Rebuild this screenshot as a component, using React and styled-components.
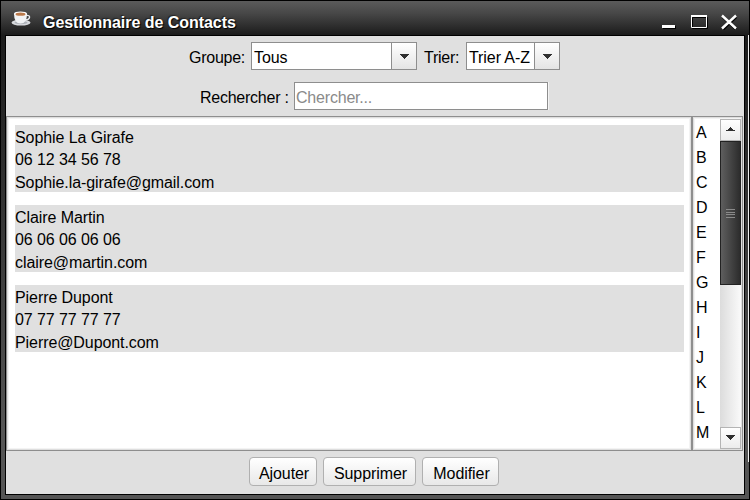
import React from "react";
import styled, { createGlobalStyle, css } from "styled-components";

const Global = createGlobalStyle`
  *, *::before, *::after { box-sizing: border-box; }
  body { margin: 0; overflow: hidden; }
`;

const Window = styled.div`
  width: 750px;
  height: 500px;
  display: grid;
  grid-template-rows: 34px 1fr;
  border: 1px solid #000;
  background: #505050;
  font: 16px/22px "Liberation Sans", Arial, sans-serif;
  letter-spacing: -0.08px;
  color: #000;
`;

const TitleBar = styled.header`
  display: flex;
  align-items: center;
  padding: 0 11px 0 9px;
  background: linear-gradient(#5b5b5b 0%, #484848 35%, #1b1b1b 100%);
  color: #fff;
`;

const Title = styled.h1`
  margin: 9px 0 0 10px;
  flex: 1;
  font-size: 16px;
  line-height: 20px;
  font-weight: bold;
  letter-spacing: -0.04px;
  text-shadow: 1px 1px 1px #000, -1px -1px 1px #222;
`;

const TitleIcon = styled.svg`
  display: block;
  margin-top: 2px;
`;

const WindowControls = styled.svg`
  display: block;
  margin-top: 7px;
`;

const Frame = styled.div`
  display: grid;
  grid-template-columns: 1fr 3px 1px;
  padding-left: 4px;
  padding-bottom: 4px;
  background: linear-gradient(#1b1b1b, #555 85%);
`;

const EdgeLight = styled.div`
  grid-column: 3;
  height: 427px;
  background: linear-gradient(90deg, #fff, #ddd);
`;

const Content = styled.main`
  display: grid;
  grid-template-rows: 80px 335px 43px;
  border: 1px solid #000;
  background: #e0e0e0;
`;

const Filters = styled.section`
  display: flex;
  flex-direction: column;
  align-items: center;
  padding: 6px 1px 0 0;
  gap: 12px;
`;

const FilterRow = styled.div`
  display: flex;
  align-items: center;
  gap: 6px;
  height: 28px;
`;

const Label = styled.label`
  width: ${(p) => p.$width}px;
  padding-top: 4px;
  white-space: pre;
  letter-spacing: -0.25px;
`;

const SortLabel = styled(Label)`
  padding-left: 1px;
`;

const Select = styled.div`
  display: flex;
  width: ${(p) => p.$width}px;
  height: 28px;
  border: 1px solid #8e8e8e;
  background: #fff;
`;

const SelectValue = styled.span`
  flex: 1;
  padding: 4px 0 0 2px;
  white-space: nowrap;
`;

const SelectButton = styled.span`
  display: grid;
  place-items: center;
  width: 25px;
  padding-top: 1px;
  border-left: 1px solid #8e8e8e;
  background: linear-gradient(#fff, #e4e4e4);
`;

const SearchField = styled.input`
  width: 254px;
  height: 28px;
  margin: 0 1px 0 0;
  padding: 4px 2px 0 1px;
  border: 1px solid #8e8e8e;
  border-radius: 0;
  outline: 0;
  background: #fff;
  font: inherit;
  letter-spacing: -0.2px;
  box-shadow: 1px 0 0 #f4f4f4;
  &::placeholder { color: #8a8a8a; }
`;

const Panes = styled.div`
  display: grid;
  grid-template-columns: 686px 51px;
`;

const pane = css`
  border: 1px solid #8e8e8e;
  background: #fff;
  box-shadow: inset 0 0 0 1px #dedede, inset 0 0 0 2px #f3f3f3;
  overflow: hidden;
`;

const ContactList = styled.ul`
  ${pane}
  margin: 0;
  padding: 8px 7px 0 8px;
  list-style: none;
  display: flex;
  flex-direction: column;
  gap: 13px;
`;

const Contact = styled.li`
  height: 67px;
  background: #e0e0e0;
  display: grid;
  grid-template-rows: 22px 23px 22px;
  line-height: 26px;
`;

const IndexPane = styled.nav`
  ${pane}
  display: flex;
  justify-content: space-between;
  padding: 2px 1px 1px 3px;
`;

const Letters = styled.div`
  display: flex;
  flex-direction: column;
`;

const Letter = styled.span`
  height: 25px;
  line-height: 27px;
`;

const Scrollbar = styled.div`
  display: grid;
  grid-template-rows: 22px 144px 1fr 22px;
  width: 21px;
  background: linear-gradient(90deg, #dcdcdc, #fafafa);
`;

const ScrollButton = styled.div`
  display: grid;
  place-items: center;
  border: 1px solid #b4b4b4;
  background: linear-gradient(#fff, #ececec);
`;

const Thumb = styled.div`
  display: grid;
  place-items: center;
  border: 1px solid #222;
  background: linear-gradient(90deg, #5e5e5e, #4a4a4a 40%, #2c2c2c);
`;

const Actions = styled.footer`
  display: flex;
  justify-content: center;
  gap: 6px;
  padding: 6px 2px 0 0;
`;

const ActionButton = styled.button`
  width: ${(p) => p.$width}px;
  height: 29px;
  padding: 5px 0 0 2px;
  border: 1px solid #b0b0b0;
  border-radius: 4px;
  background: linear-gradient(#fff, #e8e8e8);
  color: #000;
  font: inherit;
  letter-spacing: inherit;
  white-space: nowrap;
`;

const Arrow = ({ up }) => (
  <svg width="9" height="6" viewBox="0 0 9 6" shapeRendering="crispEdges" fill="#303030">
    <path d={up ? "M4 0h1v1h1v1h1v1h2v1H0V3h2V2h1V1h1z" : "M0 0h9v1H8v1H7v1H6v1H5v1H4V4H3V3H2V2H1V1H0z"} />
  </svg>
);

const contacts = [
  ["Sophie La Girafe", "06 12 34 56 78", "Sophie.la-girafe@gmail.com"],
  ["Claire Martin", "06 06 06 06 06", "claire@martin.com"],
  ["Pierre Dupont", "07 77 77 77 77", "Pierre@Dupont.com"],
];

export default function App() {
  return (
    <>
      <Global />
      <Window>
        <TitleBar>
          <TitleIcon width="23" height="18" viewBox="0 0 23 18">
            <ellipse cx="11" cy="12.600" rx="9.5" ry="3" fill="#d8dade" />
            <ellipse cx="11" cy="12.6" rx="6.5" ry="1.7" fill="#aeb2b8" />
            <path d="M16 5.5q4-.5 3.5 2t-5 2.5" fill="none" stroke="#e8eaee" strokeWidth="1.4" />
            <path d="M4 3.5q0 10 6.5 10T17 3.5z" fill="#f1f3f5" />
            <ellipse cx="10.5" cy="3.8" rx="6.5" ry="2.4" fill="#fff" />
            <ellipse cx="10.5" cy="4.2" rx="5" ry="1.6" fill="#b9794b" />
          </TitleIcon>
          <Title>Gestionnaire de Contacts</Title>
          <WindowControls width="76" height="17" viewBox="0 0 76 17">
            <g fill="none" stroke="#000">
              <path d="M1 14.500h13" strokeWidth="3" />
              <path d="M30.500 4.500h15v11h-15z" />
              <path d="M61 4l13 12M74 4L61 16" strokeWidth="3" />
            </g>
            <g fill="none" stroke="#fff">
              <path d="M0 13.500h13" strokeWidth="3" />
              <path d="M29.500 3.500h15v11h-15z" />
              <path d="M29 3h16" strokeWidth="2" />
              <path d="M60 2.500l14 13M74 2.500l-14 13" strokeWidth="2.400" />
            </g>
          </WindowControls>
        </TitleBar>
        <Frame>
          <Content>
            <Filters>
              <FilterRow>
                <Label $width={56}>Groupe:</Label>
                <Select $width={166}>
                  <SelectValue>Tous</SelectValue>
                  <SelectButton><Arrow /></SelectButton>
                </Select>
                <SortLabel $width={37}>Trier:</SortLabel>
                <Select $width={94}>
                  <SelectValue>Trier A-Z</SelectValue>
                  <SelectButton><Arrow /></SelectButton>
                </Select>
              </FilterRow>
              <FilterRow>
                <Label $width={88}>Rechercher :</Label>
                <SearchField placeholder="Chercher..." />
              </FilterRow>
            </Filters>
            <Panes>
              <ContactList>
                {contacts.map((lines) => (
                  <Contact key={lines[0]}>
                    {lines.map((line) => <span key={line}>{line}</span>)}
                  </Contact>
                ))}
              </ContactList>
              <IndexPane>
                <Letters>
                  {[..."ABCDEFGHIJKLM"].map((l) => <Letter key={l}>{l}</Letter>)}
                </Letters>
                <Scrollbar>
                  <ScrollButton><Arrow up /></ScrollButton>
                  <Thumb>
                    <svg width="9" height="9" viewBox="0 0 9 9" shapeRendering="crispEdges">
                      <path d="M0 .5h9M0 3.500h9M0 5.500h9M0 8.500h9" stroke="#8a8a8a" />
                    </svg>
                  </Thumb>
                  <span />
                  <ScrollButton><Arrow /></ScrollButton>
                </Scrollbar>
              </IndexPane>
            </Panes>
            <Actions>
              <ActionButton $width={68}>Ajouter</ActionButton>
              <ActionButton $width={93}>Supprimer</ActionButton>
              <ActionButton $width={77}>Modifier</ActionButton>
            </Actions>
          </Content>
          <EdgeLight />
        </Frame>
      </Window>
    </>
  );
}
